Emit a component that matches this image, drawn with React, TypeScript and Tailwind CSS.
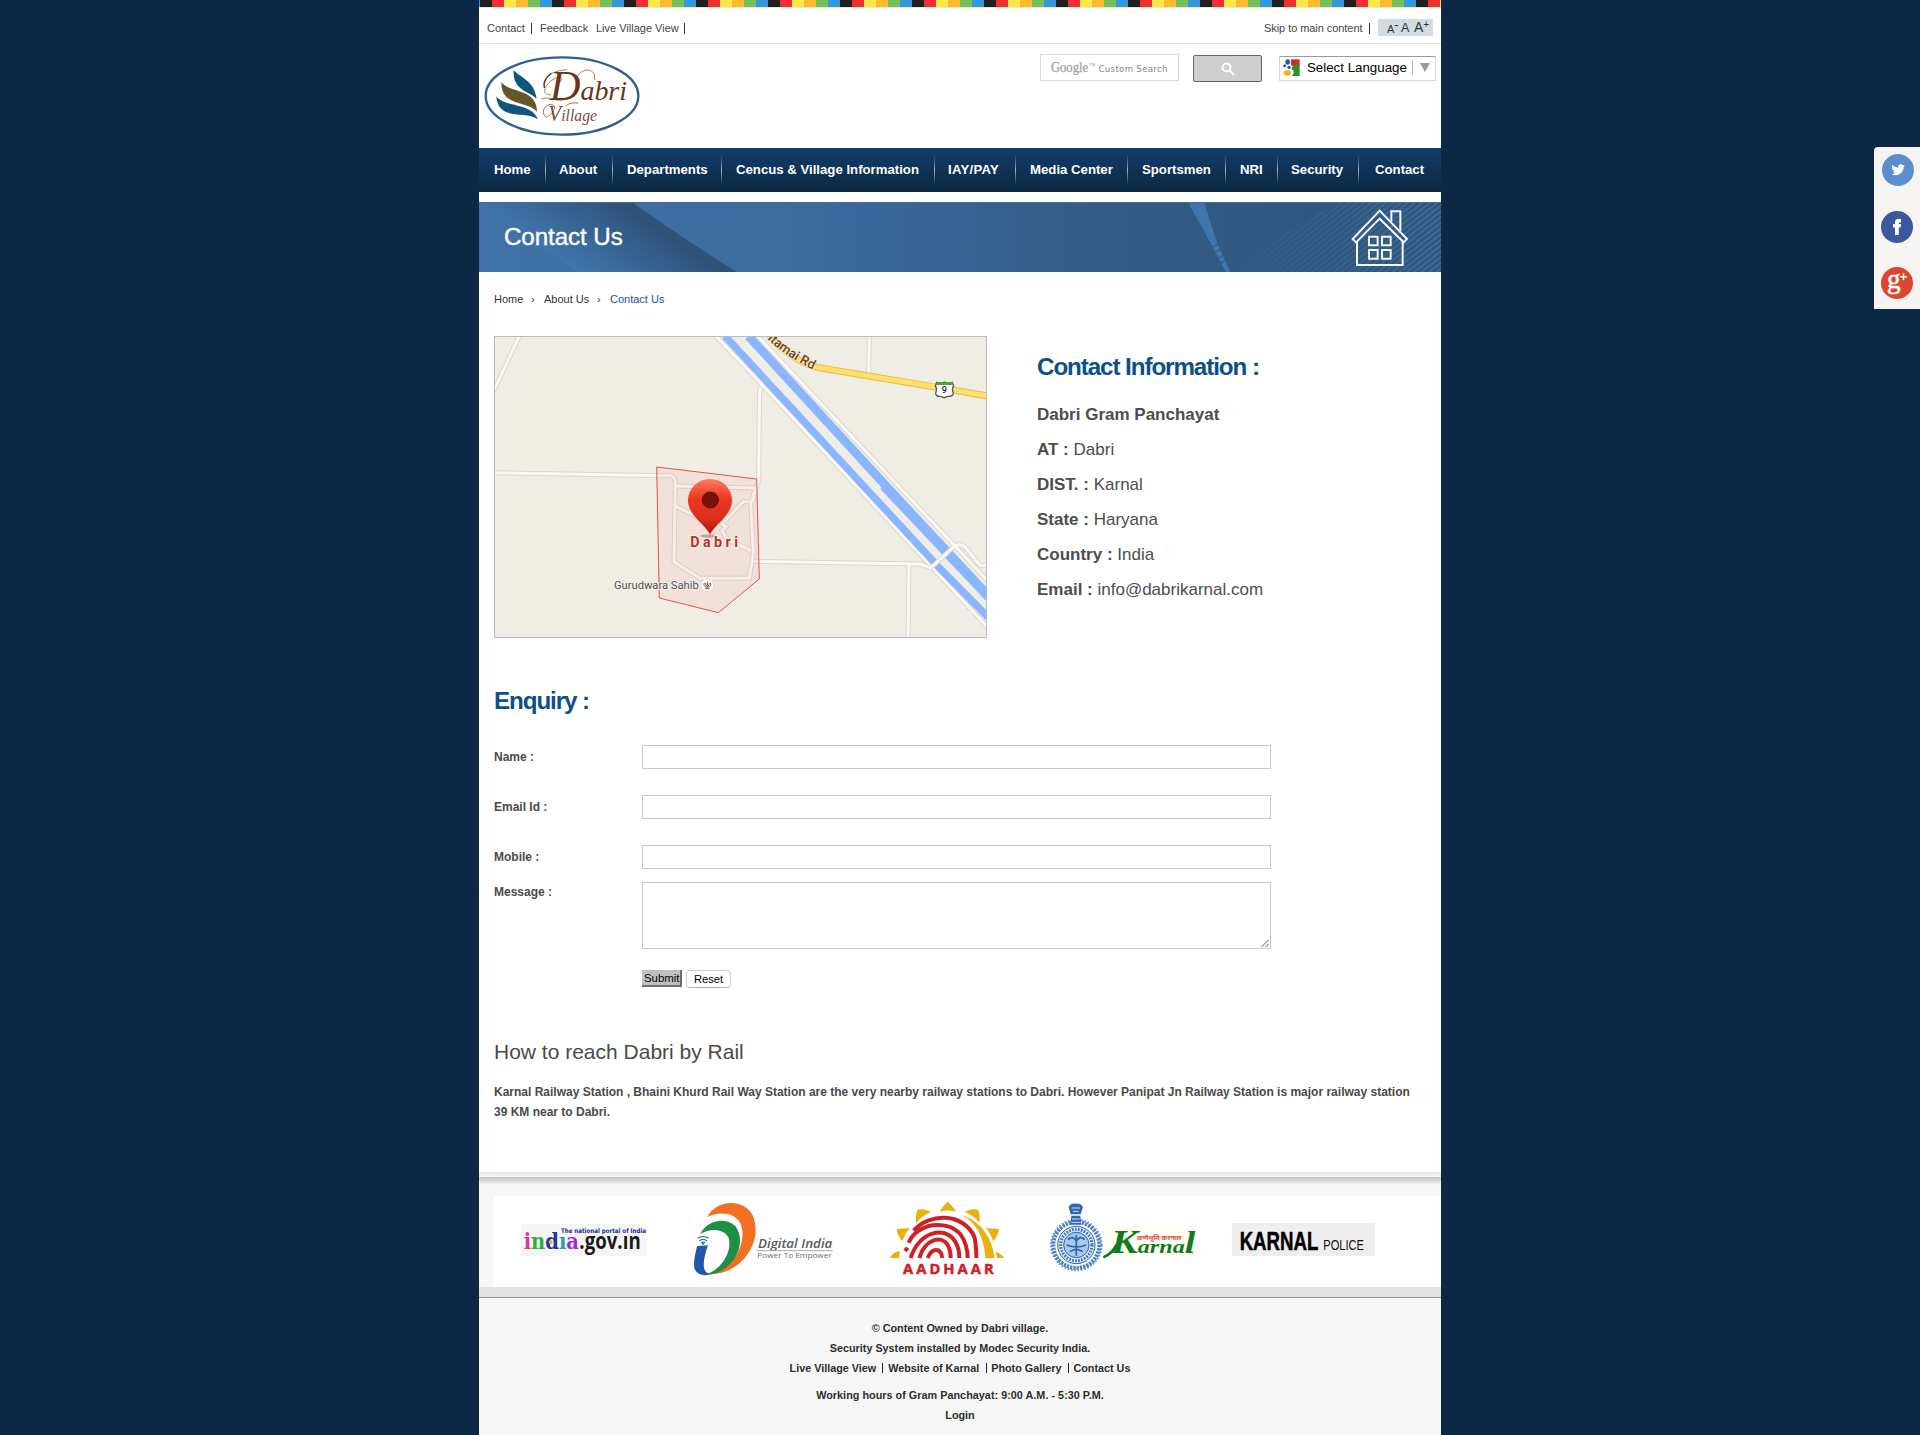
import React from "react";

const navItems: { label: string; cls: string }[] = [
  { label: "Home", cls: "w-[67px] pl-[15px]" },
  { label: "About", cls: "w-[67px] pl-[13px]" },
  { label: "Departments", cls: "w-[109px] pl-[14px]" },
  { label: "Cencus & Village Information", cls: "w-[213px] pl-[14px]" },
  { label: "IAY/PAY", cls: "w-[81px] pl-[13px] tracking-[0.25px]" },
  { label: "Media Center", cls: "w-[112px] pl-[14px]" },
  { label: "Sportsmen", cls: "w-[98px] pl-[14px]" },
  { label: "NRI", cls: "w-[52px] pl-[14px]" },
  { label: "Security", cls: "w-[81px] pl-[13px]" },
  { label: "Contact", cls: "w-[82px] pl-[16px]" },
];

function VillageLogo() {
  return (
    <svg className="block h-[82px] w-[156px]" viewBox="41 165 468 246">
      <ellipse cx="275" cy="288" rx="229" ry="116" fill="#fff" stroke="#2d5f90" strokeWidth="7" />
      <path d="M130 210 C150 235 192 240 199 297 C178 272 126 274 130 210Z" fill="#0e567b" />
      <path d="M93 247 C118 280 200 265 200 335 C172 300 92 322 93 247Z" fill="#635629" />
      <path d="M78 289 C105 325 180 305 203 358 C160 330 84 365 78 289Z" fill="#0e567b" />
      <path
        d="M213 297 C236 288 248 302 276 301 M268 238 C262 246 275 247 274 238 C271 227 250 234 236 248 C214 272 222 287 242 284 M222 262 C216 238 238 212 290 209 M318 235 C330 208 360 202 372 222 L373 240"
        fill="none"
        stroke="#9a6c55"
        strokeWidth="2.6"
      />
      <path d="M222 264 C219 247 228 230 243 220" fill="none" stroke="#6d3a20" strokeWidth="4" />
      <text x="238" y="299" fontFamily="Liberation Serif" fontStyle="italic" fontSize="84" fill="#6b3518" textLength="232" lengthAdjust="spacingAndGlyphs">
        <tspan fontSize="128">D</tspan>abri
      </text>
      <path d="M246 326 C252 338 240 345 228 352 C214 342 216 322 236 314 C248 311 254 318 252 328 M286 318 Q300 306 324 309" fill="none" stroke="#9a705d" strokeWidth="3" />
      <text x="234" y="364" fontFamily="Liberation Serif" fontStyle="italic" fontSize="52" fill="#7a503b" textLength="146" lengthAdjust="spacingAndGlyphs">
        <tspan fontSize="70">V</tspan>illage
      </text>
    </svg>
  );
}

function TopBar() {
  return (
    <div className="flex h-[37px] items-start justify-between border-b border-t border-b-[#e3e3e3] border-t-[#e6e6e6] text-[11px] leading-[14px] text-[#444]">
      <div className="flex pl-2 pt-[13px]">
        <span className="w-[44px]">Contact</span>
        <i className="mt-[2px] h-[11px] w-px bg-[#333]" />
        <span className="ml-[8px] w-[56px]">Feedback</span>
        <span className="w-[88px]">Live Village View</span>
        <i className="mt-[2px] h-[11px] w-px bg-[#333]" />
      </div>
      <div className="flex pr-2">
        <span className="w-[105px] whitespace-nowrap pt-[13px] tracking-[-0.06px]">Skip to main content</span>
        <i className="mr-[8px] mt-[15px] h-[11px] w-px bg-[#333]" />
        <div className="mt-[11px] flex h-[17px] w-[55px] bg-[#d0dbe3] pl-[9px] text-[#333]">
          <span className="flex w-[14px] pt-[3px] text-[11px]">A<sup className="top-0 mt-[-2px] text-[13px] leading-[10px]">-</sup></span>
          <span className="w-[13px] pt-[2px] text-[12.5px]">A</span>
          <span className="flex pt-[1px] text-[14px]">A<sup className="top-0 text-[10px] leading-[9px]">+</sup></span>
        </div>
      </div>
    </div>
  );
}

function Header() {
  return (
    <header className="flex h-[104px] justify-between">
      <div className="pl-[5px] pt-[11px]"><VillageLogo /></div>
      <div className="flex items-start pr-[5px] pt-[10px]">
        <div className="flex h-[27px] w-[139px] items-center border border-[#d9d9d9] bg-white pl-[10px]">
          <svg className="block h-[20px] w-[118px]" viewBox="0 0 118 20">
            <text x="0" y="14" fontFamily="Liberation Serif" fontSize="14.5" fill="#a0a0a0" stroke="#a0a0a0" strokeWidth=".25" textLength="37" lengthAdjust="spacingAndGlyphs">Google</text>
            <text x="38" y="8" fontFamily="Liberation Sans" fontSize="4" fill="#888" textLength="6">TM</text>
            <text x="47.500" y="14" fontFamily="DejaVu Sans" fontSize="8.600" fill="#888" textLength="69">Custom Search</text>
          </svg>
        </div>
        <div className="ml-[14px] mt-[1px] flex h-[27px] w-[69px] items-center justify-center rounded-[2px] border border-[#666] bg-[#cecece]">
          <svg className="block h-[14px] w-[14px]" viewBox="0 0 14 14">
            <circle cx="5.5" cy="5.5" r="4" fill="none" stroke="#fff" strokeWidth="2" />
            <path d="M8.6 8.6 L13 13" stroke="#fff" strokeWidth="2.2" />
          </svg>
        </div>
        <div className="ml-[17px] mt-[2px] flex h-[25px] w-[157px] items-center border border-[#d5d5d5] border-t-[#9b9b9b] bg-white text-[13.3px] text-black">
          <svg className="mb-[2px] ml-[3px] block h-[18px] w-[17px]" viewBox="0 0 51 54">
            <path d="M24 1 H50 V20 H24Z" fill="#d92a1c" />
            <path d="M50 16 V51 H26 Q36 42 30 33 Q22 30 30 20 Q38 15 50 16Z" fill="#2f8f2c" />
            <ellipse cx="14" cy="9" rx="7" ry="8" fill="#1f56c4" />
            <circle cx="5" cy="20" r="4.500" fill="#1f56c4" />
            <circle cx="18" cy="25" r="5" fill="#1f56c4" />
            <ellipse cx="13" cy="42" rx="11" ry="8.500" fill="#f2b21b" />
          </svg>
          <span className="mb-[2px] ml-[7px] w-[105px] whitespace-nowrap leading-[20px]">Select Language</span>
          <i className="mb-[2px] h-[15px] w-px bg-[#bbb]" />
          <svg className="mb-[2px] ml-[7px] block h-[9px] w-[10px]" viewBox="0 0 10 9"><path d="M0 0H10L5 9Z" fill="#9b9b9b" /></svg>
        </div>
      </div>
    </header>
  );
}

function Nav() {
  return (
    <nav className="flex h-[44px] bg-gradient-to-b from-[#123d6b] to-[#0d2844] text-[13.2px] font-bold text-white">
      {navItems.map((it, i) => (
        <div key={it.label} className={"flex shrink-0 items-center justify-between whitespace-nowrap " + it.cls}>
          <span className="leading-[16px]">{it.label}</span>
          {i < navItems.length - 1 && (
            <i className="h-[30px] w-px bg-gradient-to-b from-transparent via-[#a5b4c4] to-transparent" />
          )}
        </div>
      ))}
    </nav>
  );
}

function Banner() {
  return (
    <div className="relative mt-[10px] h-[70px] overflow-hidden">
      <svg className="absolute inset-0 h-[70px] w-[962px]" viewBox="0 0 962 70">
        <defs>
          <linearGradient id="base"><stop offset="0" stopColor="#4072a8" /><stop offset=".3" stopColor="#3d6c9f" /><stop offset=".42" stopColor="#39669a" /><stop offset=".6" stopColor="#345d87" /><stop offset="1" stopColor="#2e547c" /></linearGradient>
          <linearGradient id="band" gradientUnits="userSpaceOnUse" x1="75" y1="62" x2="135" y2="-28"><stop offset="0" stopColor="#4378b3" /><stop offset=".8" stopColor="#2e5379" /><stop offset="1" stopColor="#2e5379" /></linearGradient>
          <linearGradient id="fade"><stop offset="0" stopColor="#fff" stopOpacity="0" /><stop offset="1" stopColor="#fff" /></linearGradient>
          <pattern id="hatch" width="4.500" height="5" patternUnits="userSpaceOnUse" patternTransform="rotate(52)"><rect width="2" height="5" fill="#3d6b9b" /></pattern>
          <mask id="hm"><path d="M740 70 L860 0 H962 V70Z" fill="url(#fade)" /></mask>
        </defs>
        <rect width="962" height="70" fill="url(#base)" />
        <path d="M3 0 H153 Q200 34 258 70 H98Z" fill="url(#band)" />
        <path d="M709 0 H725 L737 38 L751 70 H747 L732 42Z" fill="#4175ad" />
        <path d="M732 46 L740 42 M735 51 L742 47 M738 57 L745 53 M741 62 L747 58" stroke="#2e5379" strokeWidth="1" />
        <rect width="962" height="70" fill="url(#hatch)" mask="url(#hm)" />
        <rect width="962" height="1" fill="#416d99" />
      </svg>
      <div className="relative flex h-[70px] justify-between pl-[25px] pr-[32px]">
        <h1 className="pt-[20px] text-[24.2px] leading-[30px] tracking-[-0.1px] text-white [-webkit-text-stroke:0.4px_white]">Contact Us</h1>
        <svg className="mt-[6px] block h-[59px] w-[58px]" viewBox="602 203 174 177" fill="none" stroke="#f4f6f8" strokeWidth="6">
          <path d="M688 211 L770 296 L760 306 L688 235 L617 306 L607 296Z" />
          <path d="M620 304 V374 H757 V304 M723 244 V213 H750 V272" />
          <path d="M656 289H682V315H656Z M695 289H721V315H695Z M656 329H682V355H656Z M695 329H721V355H695Z" />
        </svg>
      </div>
    </div>
  );
}

function VillageMap() {
  const roads = [
    "M120 44 L40 215", "M700 40 L842 190 L1350 735 L1530 930", "M825 40 L1215 455 L1530 790",
    "M843 200 Q838 210 838 260 L836 478 L818 545", "M40 458 L560 467 Q584 464 586 485 L582 726 L660 775 L808 775 L820 700 L812 545 L790 545 L726 612 L738 620 L726 632 L740 656 L812 692",
    "M586 498 L826 504 L815 545", "M586 558 L650 590", "M820 724 L1320 732 L1352 744 L1420 682 Q1440 665 1458 684 L1500 736 H1530",
    "M1287 732 L1284 960", "M1168 40 L1166 165",
  ];
  return (
    <svg className="block h-[302px] w-[493px] shrink-0" viewBox="42 48 1479 906">
      <defs>
        <linearGradient id="pin" x2="0" y2="1"><stop offset="0" stopColor="#ff7a66" /><stop offset=".35" stopColor="#ee3620" /><stop offset=".7" stopColor="#dd2f1e" /><stop offset="1" stopColor="#b3160f" /></linearGradient>
      </defs>
      <rect x="42" y="48" width="1479" height="906" fill="#f0ede5" />
      {roads.map((d) => <path key={d} d={d} fill="none" stroke="#dcd7cc" strokeWidth="15" />)}
      {roads.map((d) => <path key={d} d={d} fill="none" stroke="#faf9f6" strokeWidth="9" />)}
      <path d="M735 48 L1382 748 L1530 897" fill="none" stroke="#8ab6ff" strokeWidth="22" />
      <path d="M805 48 L1218 498 L1530 832" fill="none" stroke="#8ab6ff" strokeWidth="26" />
      <path d="M1206 502 L1530 845" fill="none" stroke="#8ab6ff" strokeWidth="14" />
      <path d="M1352 744 L1420 682" fill="none" stroke="#dcd7cc" strokeWidth="14" />
      <path d="M1350 746 L1422 680" fill="none" stroke="#faf9f6" strokeWidth="9" />
      <path d="M865 40 Q930 120 1010 142 L1166 168 L1370 202 L1530 229" fill="none" stroke="#e2b958" strokeWidth="21" />
      <path d="M865 40 Q930 120 1010 142 L1166 168 L1370 202 L1530 229" fill="none" stroke="#ffe168" strokeWidth="15" />
      <path id="rd" d="M862 57 Q910 105 1004 152" fill="none" />
      <text fontFamily="Roboto" fontWeight="500" fontSize="39" fill="#6b4413" stroke="#f7ecd0" strokeWidth="5" paintOrder="stroke"><textPath href="#rd">itamai Rd</textPath></text>
      <path d="M1370 187 Q1380 192 1393 186 Q1406 192 1417 187 L1421 198 Q1414 206 1420 220 Q1418 230 1404 229 L1393 233 L1382 229 Q1368 230 1367 220 Q1372 206 1366 198Z" fill="#fff" stroke="#555" strokeWidth="4" />
      <path d="M1370 186 H1417 L1419 195 H1368Z" fill="#5b9a3c" />
      <text x="1393" y="220" fontFamily="Roboto" fontWeight="500" fontSize="27" fill="#222" textAnchor="middle">9</text>
      <path d="M530 441 L830 477 L838 777 L715 878 L538 834Z" fill="#ff4a3a" fillOpacity=".07" stroke="#e5504a" strokeWidth="3" />
      <ellipse cx="688" cy="648" rx="26" ry="5" fill="#000" fillOpacity=".25" />
      <path d="M690 643 C672 610 624 585 624 541 A66 64 0 0 1 756 541 C756 585 708 610 690 643Z" fill="url(#pin)" />
      <circle cx="691" cy="540" r="24" fill="#7a120b" stroke="#5b0e09" strokeWidth="3" />
      <text x="631" y="682" fontFamily="Roboto" fontWeight="700" fontSize="43" fill="#b3322c" stroke="#fbeeea" strokeWidth="6" paintOrder="stroke" textLength="143">Dabri</text>
      <text x="402" y="807" fontFamily="Roboto" fontSize="35" fill="#505050" stroke="#f6f2ec" strokeWidth="5" paintOrder="stroke" textLength="254" lengthAdjust="spacingAndGlyphs">Gurudwara Sahib</text>
      <circle cx="682" cy="796" r="19" fill="#fff" stroke="#d8d0c8" strokeWidth="2" />
      <path d="M682 784 V806 M673 788 Q668 800 682 802 Q696 800 691 788 M677 789 Q674 797 682 798 Q690 797 687 789 M675 806 H689" fill="none" stroke="#86604f" strokeWidth="3" />
      <rect x="43.5" y="49.5" width="1476" height="903" fill="none" stroke="#bcbcbc" strokeWidth="3" />
    </svg>
  );
}

const details = [
  ["AT :", "Dabri"],
  ["DIST. :", "Karnal"],
  ["State :", "Haryana"],
  ["Country :", "India"],
  ["Email :", "info@dabrikarnal.com"],
];

function Enquiry() {
  return (
    <section className="mt-[47px] text-[12px] font-bold leading-[24px] text-[#4a4a4a]">
      <h2 className="text-[24.2px] font-bold leading-[32px] tracking-[-1.1px] text-[#0c5089]">Enquiry :</h2>
      <div className="mt-[28px] grid grid-cols-[148px_629px]">
        {["Name :", "Email Id :", "Mobile :"].map((l) => (
          <React.Fragment key={l}>
            <label className="h-[50px]">{l}</label>
            <div className="h-[24px] border border-[#c9c9c9] bg-white" />
          </React.Fragment>
        ))}
      </div>
      <div className="mt-[-13px] grid grid-cols-[148px_629px]">
        <label className="leading-[20px]">Message :</label>
        <div className="flex h-[67px] items-end justify-end border border-[#c9c9c9] bg-white">
          <svg className="block h-[9px] w-[9px]" viewBox="0 0 9 9"><path d="M0.5 8 L7.5 1 M4.5 8 L7.5 5" stroke="#555" strokeWidth="1" /></svg>
        </div>
      </div>
      <div className="mt-[21px] flex pl-[148px] text-[11px] font-normal text-black">
        <button className="h-[17px] w-[40px] overflow-hidden whitespace-nowrap border-b-2 border-r-2 border-[#6e6e6e] bg-[#c0c0c0] pl-[2px] text-left text-[11.4px] leading-[17px]">Submit</button>
        <button className="ml-[4px] h-[18px] w-[45px] rounded-[4px] border border-[#d0d0d0] border-b-[#b4b4b4] bg-white text-[11.2px] leading-[16px]">Reset</button>
      </div>
    </section>
  );
}

function IndiaGov() {
  return (
    <svg className="block h-[32px] w-[126px]" viewBox="123 192 378 96">
      <rect x="123" y="192" width="378" height="96" fill="#f5f5f5" />
      <text x="131" y="266" fontFamily="DejaVu Serif" fontWeight="700" fontSize="66" textLength="166" lengthAdjust="spacingAndGlyphs">
        <tspan fill="#d63aa0">i</tspan><tspan fill="#27b23a">n</tspan><tspan fill="#2333a0">d</tspan><tspan fill="#23a4a0">ı</tspan><tspan fill="#a12bd6">a</tspan>
      </text>
      <text x="298" y="266" fontFamily="Open Sans" fontWeight="700" fontSize="70" fill="#1a1a1a" textLength="184" lengthAdjust="spacingAndGlyphs">.gov.ın</text>
      <circle cx="212" cy="246" r="6" fill="#f2b21b" />
      <rect x="244" y="198" width="257" height="22" fill="#f5f5f5" />
      <text x="243" y="218" fontFamily="DejaVu Sans" fontWeight="700" fontSize="19" fill="#1b2c88" textLength="255" lengthAdjust="spacingAndGlyphs">The national portal of India</text>
    </svg>
  );
}

function DigitalIndia() {
  return (
    <svg className="block h-[76px] w-[142px]" viewBox="636 122 426 228">
      <path d="M682 170 C705 120 790 110 818 165 C850 240 790 335 700 341 C775 310 800 235 782 190 C765 155 715 152 682 170Z" fill="#f36f21" />
      <path d="M661 221 C680 180 735 168 766 197 C805 250 760 345 668 345 C720 335 760 275 745 230 C730 204 690 203 661 221Z" fill="#1f8f45" />
      <path d="M651 257 L684 255 C672 290 660 335 690 341 C665 350 642 338 642 315 C642 290 648 275 651 257Z" fill="#2258ab" />
      <path d="M653 234 Q669 223 686 234 M658 241 Q669 234 681 241 M663 247 Q669 243 676 247" fill="none" stroke="#2258ab" strokeWidth="3.5" />
      <circle cx="669" cy="250" r="3" fill="#2258ab" />
      <text x="834" y="264" fontFamily="Open Sans" fontStyle="italic" fontWeight="600" fontSize="37" fill="#58595b" textLength="223" lengthAdjust="spacingAndGlyphs">Digital India</text>
      <path d="M830 271 H1058" stroke="#999" strokeWidth="2.5" />
      <text x="832" y="294" fontFamily="Open Sans" fontSize="24" fill="#6d6e71" textLength="223" lengthAdjust="spacingAndGlyphs">Power To Empower</text>
    </svg>
  );
}

function Aadhaar() {
  return (
    <svg className="block h-[76px] w-[116px]" viewBox="1226 120 348 228">
      <g fill="#e9b010">
        <path d="M1402 125 Q1420 140 1427 155 Q1402 148 1378 156 Q1386 138 1402 125Z" />
        <path d="M1311 149 Q1335 145 1352 156 Q1322 168 1307 191 Q1304 168 1311 149Z" />
        <path d="M1249 207 L1289 204 Q1272 222 1267 244 Q1252 230 1249 207Z" />
        <path d="M1228 294 Q1238 276 1258 272 L1257 294Z" />
        <path d="M1493 149 Q1470 145 1453 156 Q1482 168 1497 188 Q1501 168 1493 149Z" />
        <path d="M1556 207 L1516 204 Q1533 222 1538 244 Q1553 230 1556 207Z" />
        <path d="M1572 294 Q1562 280 1545 276 L1551 294Z" />
        <path d="M1446 165 C1500 185 1535 230 1543 294 H1515 C1512 235 1490 190 1446 165Z" />
      </g>
      <g fill="none" stroke="#cf2027" strokeWidth="12" strokeLinecap="butt">
        <path d="M1300 212 C1350 155 1450 160 1482 230 Q1488 255 1488 294" />
        <path d="M1285 248 C1310 190 1400 175 1442 225 Q1462 255 1462 294" />
        <path d="M1274 273 L1282 263" />
        <path d="M1291 294 C1315 215 1395 195 1425 245 Q1437 265 1437 294" />
        <path d="M1317 294 C1335 235 1385 225 1402 255 Q1411 270 1411 294" />
        <path d="M1342 294 C1355 262 1382 262 1386 294" />
      </g>
      <text x="1268" y="342" fontFamily="Open Sans" fontWeight="700" fontSize="44" fill="#cf2027" stroke="#cf2027" strokeWidth="1.500" textLength="272">AADHAAR</text>
    </svg>
  );
}

function Karnal() {
  return (
    <svg className="block h-[72px] w-[152px]" viewBox="324 124 456 216">
      <path d="M485 195 H740 V199 H775 V296 H485Z" fill="#fffef2" />
      <circle cx="409" cy="256" r="69" fill="none" stroke="#4a7fc4" strokeWidth="12" strokeDasharray="7 3" />
      <circle cx="409" cy="256" r="76" fill="none" stroke="#5f90cf" strokeWidth="6" strokeDasharray="5 5" />
      <circle cx="409" cy="256" r="56" fill="#dce9f7" stroke="#2a63b0" strokeWidth="3" />
      <circle cx="409" cy="256" r="47" fill="none" stroke="#3a73bd" strokeWidth="9" strokeDasharray="5 4" />
      <circle cx="409" cy="256" r="38" fill="#a9c8ea" stroke="#2a63b0" strokeWidth="3" />
      <path d="M384 240 Q398 226 409 244 Q421 226 434 240 M380 256 Q409 268 438 256 M390 276 Q409 262 428 276 M409 226 V288" fill="none" stroke="#2a63b0" strokeWidth="5" />
      <path d="M386 142 Q392 130 407 132 Q422 130 429 142 L422 164 H392Z M394 168 H421 L424 195 H391Z" fill="#2f67b3" />
      <path d="M395 145 H420 M398 155 H416 M396 178 H419 M394 188 H422" stroke="#cfe0f4" strokeWidth="3" />
      <path d="M493 291 Q516 282 528 258" fill="none" stroke="#0f7a1e" strokeWidth="8" strokeLinecap="round" />
      <text x="512" y="281" fontFamily="Liberation Serif" fontStyle="italic" fontWeight="700" fontSize="64" fill="#0f7a1e" textLength="254" lengthAdjust="spacingAndGlyphs">
        <tspan fontSize="98">K</tspan><tspan fontSize="58">arna</tspan><tspan fontSize="92">l</tspan>
      </text>
      <text x="591" y="240" fontFamily="Noto Sans Devanagari, Noto Sans, sans-serif" fontWeight="700" fontSize="18" fill="#e0483e" textLength="133" lengthAdjust="spacingAndGlyphs">कर्णभूमि करनाल</text>
    </svg>
  );
}

function KarnalPolice() {
  return (
    <svg className="block h-[33px] w-[143px]" viewBox="876 189 429 99">
      <rect x="876" y="189" width="429" height="99" fill="#efeded" />
      <text x="899" y="269" fontFamily="Liberation Sans" fontWeight="700" fontSize="76" fill="#000" stroke="#000" strokeWidth="1.500" textLength="236" lengthAdjust="spacingAndGlyphs">KARNAL</text>
      <text x="1150" y="269" fontFamily="Liberation Sans" fontSize="42" fill="#111" textLength="122" lengthAdjust="spacingAndGlyphs">POLICE</text>
    </svg>
  );
}

function Footer() {
  return (
    <footer className="h-[263px] bg-[#f7f7f7]">
      <div className="h-[5px] bg-gradient-to-b from-[#e2e3e4] to-[#f8f8f9]" />
      <div className="h-[8px] bg-gradient-to-b from-[#c2c2c2] to-[#f7f7f7]" />
      <div className="ml-[15px] mt-[11px] flex h-[91px] items-start bg-white">
        <div className="w-[171px] pl-[27px] pt-[28px]"><IndiaGov /></div>
        <div className="ml-[27px] pt-[5px]"><DigitalIndia /></div>
        <div className="ml-[55px] pt-[4px]"><Aadhaar /></div>
        <div className="ml-[43px] pt-[5px]"><Karnal /></div>
        <div className="ml-[32px] pt-[27px]"><KarnalPolice /></div>
      </div>
      <div className="h-[11px] border-b border-[#8a959c] bg-[#e1e1e1]" />
      <div className="flex h-[137px] flex-col items-center bg-[#f6f6f6] pt-[20px] text-[10.8px] font-bold leading-[20px] text-[#2d2d2d]">
        <p>© Content Owned by Dabri village.</p>
        <p>Security System installed by Modec Security India.</p>
        <p className="flex items-center whitespace-nowrap">
          <span>Live Village View</span><i className="ml-[6px] mr-[5px] h-[10px] w-px bg-[#222]" />
          <span>Website of Karnal</span><i className="ml-[7px] mr-[4px] h-[10px] w-px bg-[#222]" />
          <span>Photo Gallery</span><i className="ml-[7px] mr-[4px] h-[10px] w-px bg-[#222]" />
          <span>Contact Us</span>
        </p>
        <p className="mt-[7px] tracking-[0.03px]">Working hours of Gram Panchayat: 9:00 A.M. - 5:30 P.M.</p>
        <p>Login</p>
      </div>
    </footer>
  );
}

function Social() {
  return (
    <aside className="absolute right-0 top-[147px] flex h-[162px] w-[46px] flex-col rounded-tl-[4px] bg-[#f5f4f3] pl-[7px] pt-[7px]">
      <svg className="ml-[1px] block h-[32px] w-[32px] shrink-0" viewBox="0 0 32 32">
        <circle cx="16" cy="16" r="16" fill="#5a8fcc" />
        <g transform="translate(9.500 9) scale(.56)"><path fill="#fff" d="M23.95 4.57a10 10 0 01-2.82.77 4.96 4.96 0 002.16-2.72c-.95.55-2 .95-3.13 1.18a4.92 4.92 0 00-8.38 4.48C7.69 8.09 4.07 6.13 1.64 3.16a4.9 4.9 0 001.52 6.57 4.9 4.9 0 01-2.23-.61v.06a4.92 4.92 0 003.95 4.83 5 5 0 01-2.21.08 4.94 4.94 0 004.6 3.42A9.87 9.87 0 010 19.54a14 14 0 007.55 2.21c9.05 0 14-7.5 14-13.98 0-.21 0-.42-.02-.63a9.94 9.94 0 002.42-2.57z" /></g>
      </svg>
      <svg className="mt-[25px] block h-[32px] w-[32px] shrink-0" viewBox="0 0 32 32">
        <circle cx="16" cy="16" r="16" fill="#3b579d" />
        <path d="M14 24V16.500H12V13H14V11.200Q14 8 17.400 8H20V11.400H18.600Q17.800 11.400 17.800 12.300V13H20L19.600 16.500H17.800V24Z" fill="#fff" />
      </svg>
      <svg className="mt-[24px] block h-[32px] w-[32px] shrink-0" viewBox="0 0 32 32">
        <circle cx="16" cy="16" r="16" fill="#dc4630" />
        <text x="6" y="20.500" fontFamily="Liberation Serif" fontSize="27" fill="#fff" stroke="#fff" strokeWidth=".5">g</text>
        <path d="M22.500 6.200 V13.200 M19 9.700 H26" stroke="#fff" strokeWidth="1.5" />
      </svg>
    </aside>
  );
}

export default function App() {
  return (
    <div className="relative h-[1435px] w-[1920px] overflow-hidden bg-[#0d2844] font-['Liberation_Sans',Arial,sans-serif]">
      <div className="ml-[479px] h-[1435px] w-[962px] bg-white">
        <div className="h-[7px] bg-[repeating-linear-gradient(90deg,#1f221f_0_12px,#ef2f2a_12px_24px,#f5ea45_24px_36px,#fdbb2f_36px_48px,#72be5b_48px_60px,#3797d4_60px_72px)] bg-[length:72px_7px] bg-[position:1px_0]" />
        <TopBar />
        <Header />
        <Nav />
        <Banner />
        <main className="h-[900px] pl-[15px]">
          <div className="flex pt-[19px] text-[11px] leading-[16px] text-[#333]">
            <span className="w-[37px]">Home</span>
            <span className="w-[13px]">›</span>
            <span className="w-[53px]">About Us</span>
            <span className="w-[13px]">›</span>
            <span className="text-[#1553a0]">Contact Us</span>
          </div>
          <div className="mt-[29px] flex">
            <VillageMap />
            <div className="pl-[50px] pt-[15px] text-[17px] leading-[35px] text-[#4d4d4d]">
              <h2 className="mb-[14px] text-[24.2px] font-bold leading-[32px] tracking-[-1.08px] text-[#0c5089]">Contact Information :</h2>
              <p className="font-bold">Dabri Gram Panchayat</p>
              {details.map(([k, v]) => (
                <p key={k}><b>{k}</b> {v}</p>
              ))}
            </div>
          </div>
          <Enquiry />
          <section className="mt-[49px] text-[#4a4a4a]">
            <h3 className="text-[21px] leading-[30px]">How to reach Dabri by Rail</h3>
            <p className="mt-[15px] w-[930px] text-[12px] font-bold leading-[20px]">
              Karnal Railway Station , Bhaini Khurd Rail Way Station are the very nearby railway stations to Dabri. However Panipat Jn Railway Station is major railway station 39 KM near to Dabri.
            </p>
          </section>
        </main>
        <Footer />
      </div>
      <Social />
    </div>
  );
}
